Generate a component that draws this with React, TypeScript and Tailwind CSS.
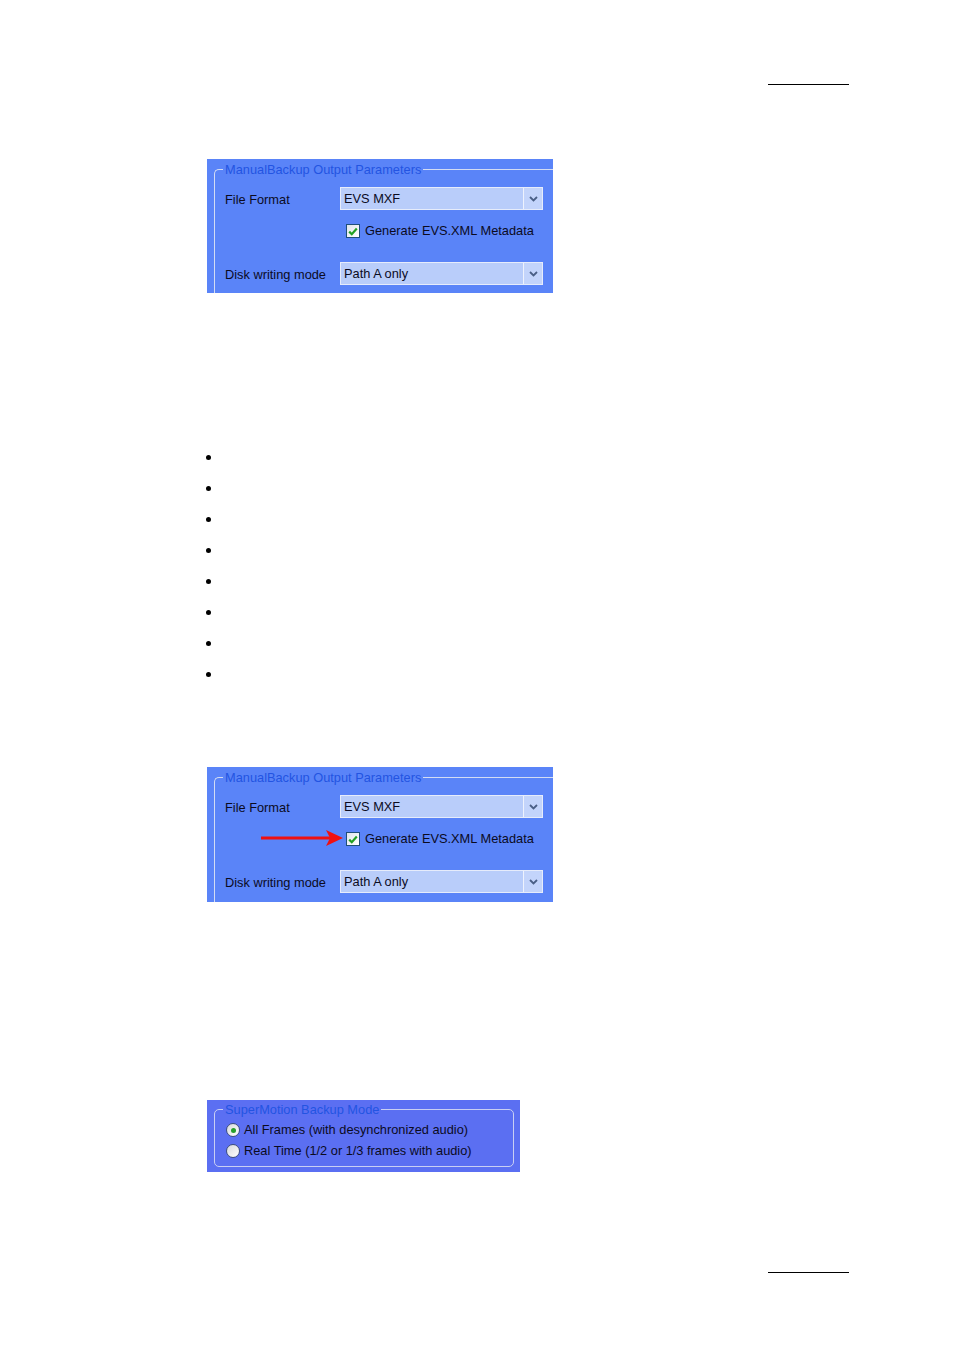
import React from "react";

const font = { fontFamily: '"Liberation Sans", Arial, sans-serif' };

function Chevron() {
  return (
    <svg width="9" height="6" viewBox="0 0 9 6" aria-hidden>
      <path d="M1 1 L4.5 4.5 L8 1" fill="none" stroke="#4a5f86" strokeWidth="1.8" />
    </svg>
  );
}

function Dropdown({ value }: { value: string }) {
  return (
    <div className="flex h-[23px] w-[203px] items-stretch border border-[#e6ecfb] bg-[#b9cdfa]">
      <span className="flex flex-1 items-center pl-[3px] pt-[1px] text-[12.8px] leading-none text-[#0b0b1e]">{value}</span>
      <span className="flex w-[19px] items-center justify-center border-l border-[#eef2fd] bg-[#c3d4fb]">
        <Chevron />
      </span>
    </div>
  );
}

function Checkbox() {
  return (
    <span className="flex h-[14px] w-[14px] items-center justify-center border border-[#1f4e79] bg-gradient-to-br from-[#dfe3ea] to-white">
      <svg width="10" height="9" viewBox="0 0 10 9" aria-hidden>
        <path d="M1.2 4.6 L3.8 7.2 L8.8 1.6" fill="none" stroke="#22a023" strokeWidth="2.2" />
      </svg>
    </span>
  );
}

function Radio({ checked }: { checked?: boolean }) {
  return (
    <span className="flex h-[14px] w-[14px] items-center justify-center rounded-full border border-[#3e4f7e] bg-gradient-to-br from-[#d6d8dc] to-white">
      {checked ? <span className="h-[5px] w-[5px] rounded-full bg-[#27a02b]" /> : null}
    </span>
  );
}

function OutputPanel({ arrow, tall }: { arrow?: boolean; tall?: boolean }) {
  return (
    <div
      className={`relative ml-[207px] w-[346px] overflow-hidden bg-[#5a84f8] ${tall ? "h-[135px]" : "h-[134px]"}`}
      style={font}
    >
      <fieldset className="ml-[7px] mt-[3px] h-[200px] w-[400px] rounded-tl-[5px] border-l border-t border-[#d3dcf3] p-0">
        <legend className="ml-[8px] px-[2px] pt-[1px] text-[12.8px] leading-[13px] text-[#2354e2]">
          ManualBackup Output Parameters
        </legend>
        <div className="mt-[11px] flex h-[23px] items-center">
          <span className="w-[125px] pl-[10px] pt-[2px] text-[12.8px] text-[#0b0b1e]">File Format</span>
          <Dropdown value="EVS MXF" />
        </div>
        <div className="ml-[131px] mt-[14px] flex h-[14px] items-center gap-[5px]">
          <Checkbox />
          <span className="text-[12.8px] leading-none text-[#0b0b1e]">Generate EVS.XML Metadata</span>
        </div>
        <div className="mt-[24px] flex h-[23px] items-center">
          <span className="w-[125px] pl-[10px] pt-[2px] text-[12.8px] text-[#0b0b1e]">Disk writing mode</span>
          <Dropdown value="Path A only" />
        </div>
      </fieldset>
      {arrow ? (
        <svg className="absolute left-[53px] top-[62px]" width="84" height="18" viewBox="0 0 84 18" aria-hidden>
          <path d="M1 9 H70" stroke="#f01010" strokeWidth="3" />
          <path d="M66 1 L83 9 L66 17 L70 9 Z" fill="#f01010" />
        </svg>
      ) : null}
    </div>
  );
}

function SuperMotionPanel() {
  return (
    <div className="ml-[207px] h-[72px] w-[313px] bg-[#5b6ff2] pt-[2px]" style={font}>
      <fieldset className="ml-[7px] h-[65px] w-[300px] rounded-[5px] border border-[#c9cff3] p-0">
        <legend className="ml-[8px] px-[2px] pt-[1px] text-[12.8px] leading-[13px] text-[#2354e2]">
          SuperMotion Backup Mode
        </legend>
        <div className="mt-[4px] flex flex-col gap-[1px] pl-[11px]">
          <div className="flex h-[20px] items-center gap-[4px]">
            <Radio checked />
            <span className="pt-[1px] text-[12.8px] leading-none text-[#0b0b1e]">All Frames (with desynchronized audio)</span>
          </div>
          <div className="flex h-[20px] items-center gap-[4px]">
            <Radio />
            <span className="pt-[1px] text-[12.8px] leading-none text-[#0b0b1e]">Real Time (1/2 or 1/3 frames with audio)</span>
          </div>
        </div>
      </fieldset>
    </div>
  );
}

export default function App() {
  const bullets = Array.from({ length: 8 });
  return (
    <div className="flex h-[1350px] w-[954px] flex-col bg-white">
      <div className="ml-[768px] mt-[84px] h-px w-[81px] bg-black" />
      <div className="mt-[74px]">
        <OutputPanel />
      </div>
      <ul className="ml-[206px] mt-[162px] flex flex-col gap-[26px]">
        {bullets.map((_, i) => (
          <li key={i} className="h-[5px] w-[5px] rounded-full bg-black" />
        ))}
      </ul>
      <div className="mt-[90px]">
        <OutputPanel arrow tall />
      </div>
      <div className="mt-[198px]">
        <SuperMotionPanel />
      </div>
      <div className="ml-[768px] mt-[100px] h-px w-[81px] bg-black" />
    </div>
  );
}
